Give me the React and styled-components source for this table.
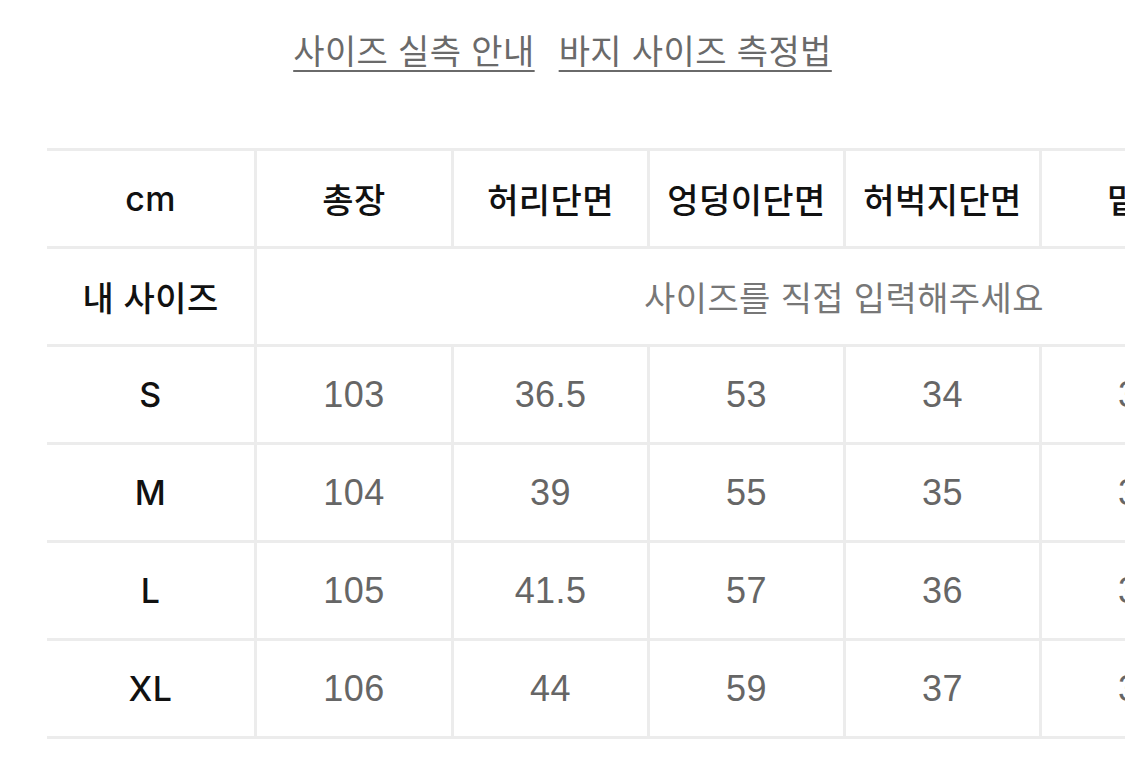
import styled, { createGlobalStyle } from 'styled-components';

const GlobalStyle = createGlobalStyle`
  html, body {
    margin: 0;
    padding: 0;
    background: #ffffff;
  }
  body {
    font-family: "Liberation Sans", "Noto Sans CJK KR", sans-serif;
    overflow: hidden;
  }
`;

const Page = styled.div`
  width: 1125px;
  height: 765px;
  overflow: hidden;
  background: #fff;
`;

const LinkBar = styled.div`
  display: flex;
  justify-content: center;
  gap: 24px;
  padding-top: 29px;
  height: 148px;
  box-sizing: border-box;
`;

const GuideLink = styled.a`
  font-size: 34px;
  line-height: 46px;
  height: 46px;
  color: #6a6a6a;
  text-decoration: underline;
  text-decoration-thickness: 2px;
  text-underline-offset: 6px;
  letter-spacing: 0.4px;
  cursor: pointer;
`;

const TableScroll = styled.div`
  margin-left: 47px;
  overflow: hidden;
`;

const Grid = styled.div`
  display: grid;
  grid-template-columns: 210px 197px repeat(5, 196px);
  width: max-content;
  border-top: 3px solid #ececec;
`;

const Cell = styled.div`
  height: 95px;
  display: flex;
  align-items: center;
  justify-content: center;
  border-bottom: 3px solid #ececec;
  border-right: 3px solid #ececec;
  grid-column: ${(props) => (props.$span ? `span ${props.$span}` : 'auto')};
  font-family: ${(props) =>
    props.$label ? 'Inter, "Noto Sans CJK KR", sans-serif' : '"Liberation Sans", "Noto Sans CJK KR", sans-serif'};
  font-size: ${(props) => (props.$label ? '34px' : '36px')};
  font-weight: ${(props) => (props.$label ? 500 : 400)};
  color: ${(props) => (props.$label ? '#111' : '#666')};
  letter-spacing: 0.4px;
  white-space: nowrap;
`;

const Placeholder = styled.span`
  font-size: 34px;
  color: #777;
  letter-spacing: 0.4px;
`;

const headers = ['총장', '허리단면', '엉덩이단면', '허벅지단면', '밑위', '밑단단면'];

const rows = [
  { size: 'S', values: ['103', '36.5', '53', '34', '30', '21'] },
  { size: 'M', values: ['104', '39', '55', '35', '31', '22'] },
  { size: 'L', values: ['105', '41.5', '57', '36', '32', '23'] },
  { size: 'XL', values: ['106', '44', '59', '37', '33', '24'] }
];

function App() {
  return (
    <Page>
      <GlobalStyle />
      <LinkBar>
        <GuideLink>사이즈 실측 안내</GuideLink>
        <GuideLink>바지 사이즈 측정법</GuideLink>
      </LinkBar>
      <TableScroll>
        <Grid>
          <Cell $label>cm</Cell>
          {headers.map((h) => (
            <Cell $label key={h}>
              {h}
            </Cell>
          ))}

          <Cell $label>내 사이즈</Cell>
          <Cell $span={6}>
            <Placeholder>사이즈를 직접 입력해주세요</Placeholder>
          </Cell>

          {rows.map((row) => [
            <Cell $label key={row.size}>
              {row.size}
            </Cell>,
            ...row.values.map((v, i) => <Cell key={row.size + i}>{v}</Cell>)
          ])}
        </Grid>
      </TableScroll>
    </Page>
  );
}

export default App;
